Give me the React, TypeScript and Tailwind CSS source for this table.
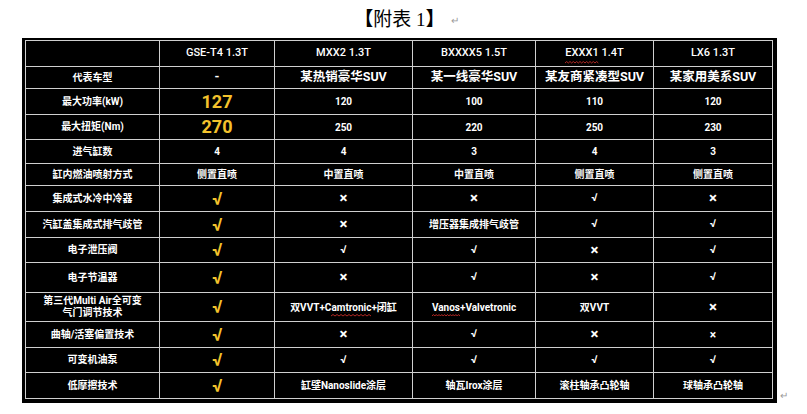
import React from 'react';

type Cell = string | { text: React.ReactNode; kind?: 'gold' | 'big' | 'mark' | 'cross' | 'smallx' };

const GOLD_CHECK: Cell = { text: '√', kind: 'gold' };
const CHECK: Cell = { text: '√', kind: 'mark' };
const CROSS: Cell = { text: '×', kind: 'cross' };

// red spell-check wave drawn under a word
function Squiggle({ children }: { children: React.ReactNode }) {
  return (
    <span className="relative inline-block">
      {children}
      <svg className="absolute left-0 -bottom-[2px] w-full h-[3px]" preserveAspectRatio="none" viewBox="0 0 40 3">
        <path
          d="M0 2 L2 0.5 L4 2 L6 0.5 L8 2 L10 0.5 L12 2 L14 0.5 L16 2 L18 0.5 L20 2 L22 0.5 L24 2 L26 0.5 L28 2 L30 0.5 L32 2 L34 0.5 L36 2 L38 0.5 L40 2"
          fill="none"
          stroke="#e0322d"
          strokeWidth="0.8"
          vectorEffect="non-scaling-stroke"
        />
      </svg>
    </span>
  );
}

const header = ['', 'GSE-T4 1.3T', 'MXX2 1.3T', 'BXXXX5 1.5T', 'EXXX1 1.4T', 'LX6 1.3T'];

const rows: { label: React.ReactNode; cells: Cell[] }[] = [
  {
    label: '代表车型',
    cells: [
      { text: '-', kind: 'big' },
      { text: '某热销豪华SUV', kind: 'big' },
      { text: '某一线豪华SUV', kind: 'big' },
      { text: '某友商紧凑型SUV', kind: 'big' },
      { text: '某家用美系SUV', kind: 'big' },
    ],
  },
  { label: '最大功率(kW)', cells: [{ text: '127', kind: 'gold' }, '120', '100', '110', '120'] },
  { label: '最大扭矩(Nm)', cells: [{ text: '270', kind: 'gold' }, '250', '220', '250', '230'] },
  { label: '进气缸数', cells: ['4', '4', '3', '4', '3'] },
  { label: '缸内燃油喷射方式', cells: ['侧置直喷', '中置直喷', '中置直喷', '侧置直喷', '侧置直喷'] },
  { label: '集成式水冷中冷器', cells: [GOLD_CHECK, CROSS, CROSS, CHECK, CROSS] },
  { label: '汽缸盖集成式排气歧管', cells: [GOLD_CHECK, CROSS, '增压器集成排气歧管', CHECK, CHECK] },
  { label: '电子泄压阀', cells: [GOLD_CHECK, CHECK, CHECK, CROSS, CHECK] },
  { label: '电子节温器', cells: [GOLD_CHECK, CROSS, CHECK, CROSS, CHECK] },
  {
    label: (
      <>
        第三代Multi Air全可变
        <br />
        气门调节技术
      </>
    ),
    cells: [
      GOLD_CHECK,
      {
        text: (
          <>
            双VVT+C<Squiggle>amtronic</Squiggle>+闭缸
          </>
        ),
      },
      {
        text: (
          <>
            <Squiggle>Vanos</Squiggle>+Valvetronic
          </>
        ),
      },
      '双VVT',
      CROSS,
    ],
  },
  { label: '曲轴/活塞偏置技术', cells: [GOLD_CHECK, CROSS, CHECK, CROSS, { text: '×', kind: 'smallx' }] },
  { label: '可变机油泵', cells: [GOLD_CHECK, CHECK, CHECK, CHECK, CHECK] },
  { label: '低摩擦技术', cells: [GOLD_CHECK, '缸壁Nanoslide涂层', '轴瓦Irox涂层', '滚柱轴承凸轮轴', '球轴承凸轮轴'] },
];

function renderCell(cell: Cell) {
  if (typeof cell === 'string') return <span className="text-[10px] font-bold">{cell}</span>;
  if (cell.kind === 'gold') return <span className="text-[18px] font-bold leading-none text-[#f3c22c]">{cell.text}</span>;
  if (cell.kind === 'big') return <span className="text-[12.5px] font-bold">{cell.text}</span>;
  if (cell.kind === 'mark') return <span className="text-[11px] font-bold">{cell.text}</span>;
  if (cell.kind === 'cross') return <span className="text-[15px] font-bold leading-none">{cell.text}</span>;
  if (cell.kind === 'smallx') return <span className="text-[12px] font-bold leading-none">{cell.text}</span>;
  return <span className="text-[10px] font-bold">{cell.text}</span>;
}

export default function App() {
  return (
    <div className="w-[807px] h-[414px] bg-white font-['Roboto','Noto_Sans_CJK_SC',sans-serif]">
      <div className="h-[38px] w-[755px] ml-[22px] flex items-center justify-center">
        <span className="relative text-[19px] leading-none text-black font-['Liberation_Serif','Noto_Sans_CJK_SC',serif]">
          <span className="font-bold">【</span>
          附表 1
          <span className="font-bold">】</span>
          <span className="absolute left-full top-[6px] ml-[6px] text-[10px] text-[#9a9a9a]">↵</span>
        </span>
      </div>

      <div className="flex items-end">
        <div className="ml-[22px] bg-black pl-[3px] pt-[2px] pr-[4px] pb-[4px]">
          <div className="grid grid-cols-[133px_114px_137px_122px_117px_118px] grid-rows-[25px_21px_25px_24px_23px_21px_25px_25px_24px_29px_28px_25px_24px_25px] gap-px p-px bg-[#cfcfcf] text-white">
            {header.map((h, i) => (
              <div key={'h' + i} className="bg-black flex items-center justify-center text-[11px] font-medium">
                {i === 4 ? (
                  <span>
                    <Squiggle>EXXX1</Squiggle> 1.4T
                  </span>
                ) : (
                  h
                )}
              </div>
            ))}
            {rows.map((row, r) => (
              <React.Fragment key={r}>
                <div className="bg-black flex items-center justify-center text-center text-[10px] font-bold leading-[12px]">
                  {row.label}
                </div>
                {row.cells.map((c, i) => (
                  <div key={i} className="bg-black flex items-center justify-center text-center">
                    {renderCell(c)}
                  </div>
                ))}
              </React.Fragment>
            ))}
          </div>
        </div>
        <span className="ml-[3px] mb-[2px] text-[10px] leading-none text-[#9a9a9a]">↵</span>
      </div>
    </div>
  );
}
